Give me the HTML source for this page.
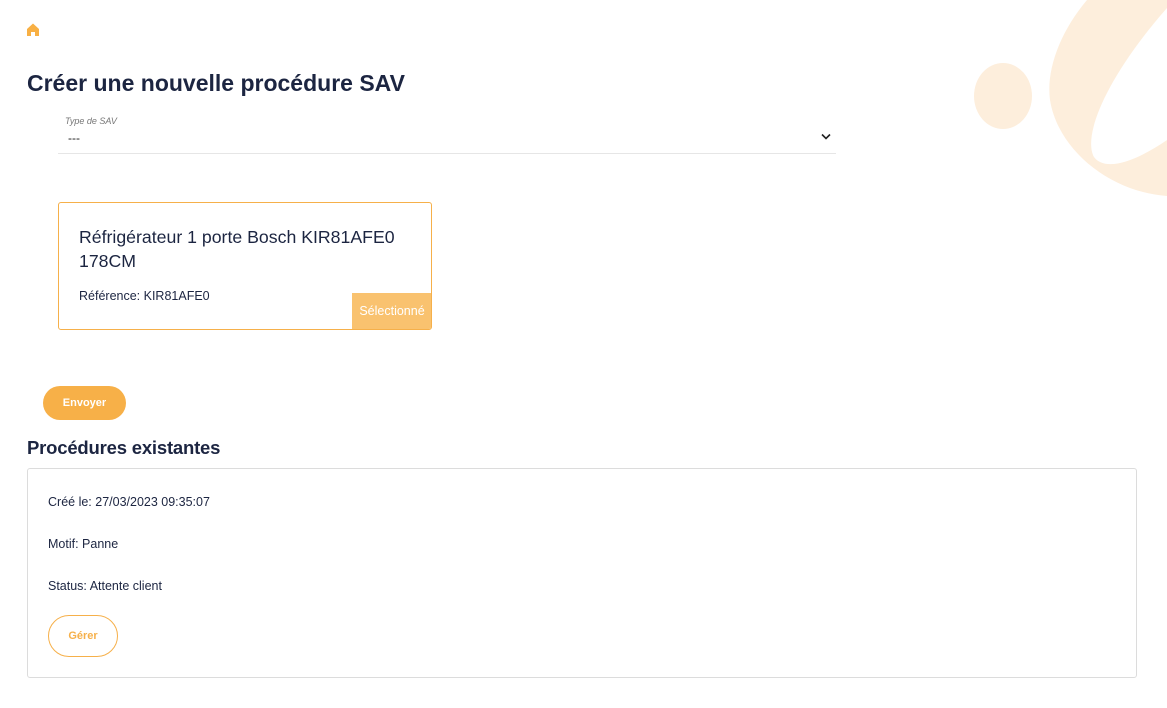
<!DOCTYPE html>
<html><head><meta charset="utf-8"><style>
*{margin:0;padding:0;box-sizing:border-box}
body{width:1167px;height:708px;background:#fff;font-family:"Liberation Sans",sans-serif;color:#1c2541;position:relative;overflow:hidden}
.a{position:absolute;white-space:nowrap}
</style></head><body>
<svg class="a" style="left:0;top:0" width="1167" height="708" viewBox="0 0 1167 708">
<ellipse cx="1003" cy="96" rx="29" ry="33" fill="#fdeedc"/>
<path d="M1087,0 C1060,32 1046,70 1050,100 C1058,150 1110,192 1167,196 L1167,140 C1135,162 1105,172 1094,157 C1082,135 1108,75 1167,8 L1167,0 Z" fill="#fdeedc"/>
<path d="M27,29 L33,23.5 L39,29 L39,36 L35,36 L35,32 L31,32 L31,36 L27,36 Z" fill="#f8b044"/>
</svg>
<div class="a" style="left:27px;top:70px;font-size:23px;font-weight:bold;letter-spacing:0">Créer une nouvelle procédure SAV</div>
<div class="a" style="left:65px;top:116px;font-size:9px;font-style:italic;color:#777">Type de SAV</div>
<div class="a" style="left:68px;top:131px;font-size:12px;color:#222">---</div>
<svg class="a" style="left:821px;top:133px" width="10" height="8"><path d="M1,1.5 L5,5.5 L9,1.5" stroke="#222" stroke-width="1.6" fill="none"/></svg>
<div class="a" style="left:58px;top:153px;width:778px;height:1px;background:#e6e6e6"></div>
<div class="a" style="left:58px;top:202px;width:374px;height:128px;border:1px solid #f6b04a;border-radius:3px;overflow:hidden">
<div class="a" style="left:20px;top:22px;font-size:17.7px;line-height:24px;white-space:normal;width:345px">Réfrigérateur 1 porte Bosch KIR81AFE0 178CM</div>
<div class="a" style="left:20px;top:86px;font-size:12.5px">Référence: KIR81AFE0</div>
<div class="a" style="left:293px;top:90px;width:80px;height:37px;background:#f9c26f;color:#fff;font-size:12.5px;line-height:37px;text-align:center">Sélectionné</div>
</div>
<div class="a" style="left:43px;top:386px;width:83px;height:34px;border-radius:17px;background:#f7b048;color:#fff;font-size:11px;font-weight:bold;line-height:34px;text-align:center">Envoyer</div>
<div class="a" style="left:27px;top:437px;font-size:18.5px;font-weight:bold;letter-spacing:-0.2px">Procédures existantes</div>
<div class="a" style="left:27px;top:468px;width:1110px;height:210px;border:1px solid #dcdcdc;border-radius:3px"></div>
<div class="a" style="left:48px;top:495px;font-size:12.5px">Créé le: 27/03/2023 09:35:07</div>
<div class="a" style="left:48px;top:537px;font-size:12.5px">Motif: Panne</div>
<div class="a" style="left:48px;top:579px;font-size:12.5px">Status: Attente client</div>
<div class="a" style="left:48px;top:615px;width:70px;height:42px;border:1px solid #f6b04a;border-radius:21px;color:#f6b04a;font-size:11px;font-weight:bold;line-height:40px;text-align:center">Gérer</div>
</body></html>
